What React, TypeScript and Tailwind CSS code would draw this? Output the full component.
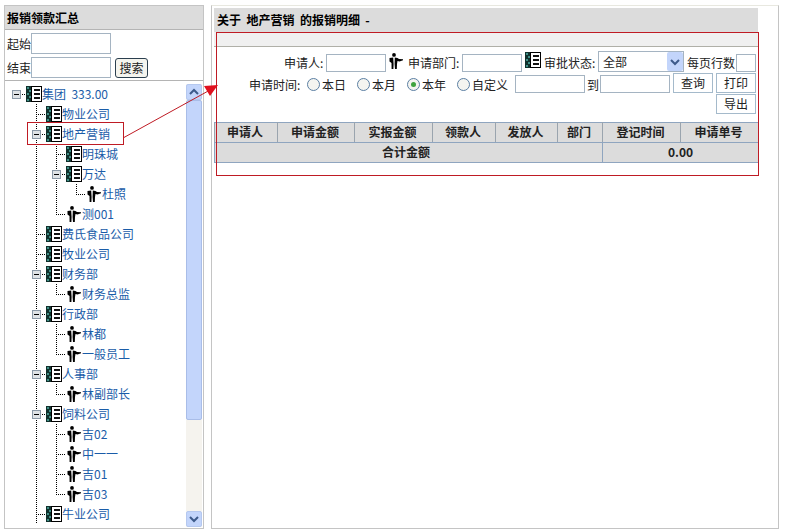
import * as React from 'react';

const FONT = "font-['Noto_Sans_CJK_SC','Liberation_Sans',sans-serif]";

type Kind = 'book' | 'person';
type Joint = 'tee' | 'corner' | 'minus' | 'minusRoot';

interface TreeRow {
  label: string;
  kind: Kind;
  joint: Joint;
  // columns to the left of the joint: true draws a dotted vertical line
  guides: boolean[];
}

const TREE: TreeRow[] = [
  { label: '集团\u00a0\u00a0333.00', kind: 'book', joint: 'minusRoot', guides: [] },
  { label: '物业公司', kind: 'book', joint: 'tee', guides: [false] },
  { label: '地产营销', kind: 'book', joint: 'minus', guides: [false] },
  { label: '明珠城', kind: 'book', joint: 'tee', guides: [false, true] },
  { label: '万达', kind: 'book', joint: 'minus', guides: [false, true] },
  { label: '杜照', kind: 'person', joint: 'corner', guides: [false, true, true] },
  { label: '测001', kind: 'person', joint: 'corner', guides: [false, true] },
  { label: '费氏食品公司', kind: 'book', joint: 'tee', guides: [false] },
  { label: '牧业公司', kind: 'book', joint: 'tee', guides: [false] },
  { label: '财务部', kind: 'book', joint: 'minus', guides: [false] },
  { label: '财务总监', kind: 'person', joint: 'corner', guides: [false, true] },
  { label: '行政部', kind: 'book', joint: 'minus', guides: [false] },
  { label: '林都', kind: 'person', joint: 'tee', guides: [false, true] },
  { label: '一般员工', kind: 'person', joint: 'corner', guides: [false, true] },
  { label: '人事部', kind: 'book', joint: 'minus', guides: [false] },
  { label: '林副部长', kind: 'person', joint: 'corner', guides: [false, true] },
  { label: '饲料公司', kind: 'book', joint: 'minus', guides: [false] },
  { label: '吉02', kind: 'person', joint: 'tee', guides: [false, true] },
  { label: '中一一', kind: 'person', joint: 'tee', guides: [false, true] },
  { label: '吉01', kind: 'person', joint: 'tee', guides: [false, true] },
  { label: '吉03', kind: 'person', joint: 'corner', guides: [false, true] },
  { label: '牛业公司', kind: 'book', joint: 'tee', guides: [false] },
];

const COLUMNS = [
  { label: '申请人', width: 'w-[63px]' },
  { label: '申请金额', width: 'w-[77px]' },
  { label: '实报金额', width: 'w-[78px]' },
  { label: '领款人', width: 'w-[63px]' },
  { label: '发放人', width: 'w-[62px]' },
  { label: '部门', width: 'w-[45px]' },
  { label: '登记时间', width: 'w-[78px]' },
  { label: '申请单号', width: 'w-[78px]' },
];

const BookIcon = () => (
  <svg width="16" height="16" viewBox="0 0 16 16" className="shrink-0">
    <rect x="0" y="0" width="6" height="16" fill="#10302c" />
    <path d="M1 1h2v2H1zM3 4h2v2H3zM1 7h2v2H1zM3 10h2v2H3zM1 13h2v2H1z" fill="#3f8f86" />
    <rect x="5.5" y="0.5" width="10" height="15" fill="#fff" stroke="#000" />
    <path d="M8 3h6v2H8zM8 7h6v2H8zM8 11h6v2H8z" fill="#111" />
  </svg>
);

const PersonIcon = () => (
  <svg width="16" height="16" viewBox="0 0 16 16" className="shrink-0">
    <circle cx="6" cy="1.9" r="1.9" fill="#000" />
    {/* left side of the jacket and leg */}
    <path d="M1.5 5L5.2 4.5L5.6 11L5.4 16H3.6L3.5 10L1.5 8.5z" fill="#000" />
    {/* right side of the jacket, arm pointing out */}
    <path d="M6.8 4.5L9.5 5L11 6L15 6.2V7.2L11.5 8.5L9.5 8L9 11L8.8 16H7L6.6 11z" fill="#000" />
  </svg>
);

const Joint = ({ joint }: { joint: Joint }) => {
  const root = joint === 'minusRoot';
  const corner = joint === 'corner';
  const minus = joint === 'minus' || root;
  return (
    <svg width="20" height="20" viewBox="0 0 20 20" className="shrink-0">
      <g stroke="#000" strokeDasharray="1 1">
        {!root && <line x1="10.5" y1="0" x2="10.5" y2={corner ? 10 : 20} />}
        <line x1="10" y1="10.5" x2="20" y2="10.5" />
      </g>
      {minus && (
        <>
          <rect x="6.5" y="6.5" width="8" height="8" fill="#dfe3e6" stroke="#8c9aa8" />
          <line x1="8" y1="10.5" x2="13" y2="10.5" stroke="#000" />
        </>
      )}
    </svg>
  );
};

const Guide = ({ on }: { on: boolean }) => (
  <svg width="20" height="20" viewBox="0 0 20 20" className="shrink-0">
    {on && <line x1="10.5" y1="0" x2="10.5" y2="20" stroke="#000" strokeDasharray="1 1" />}
  </svg>
);

const Chevron = ({ up = false, size = 10 }: { up?: boolean; size?: number }) => (
  <svg width={size} height={size} viewBox="0 0 10 10">
    <path d={up ? 'M1 7l4-4 4 4' : 'M1 3l4 4 4-4'} fill="none" stroke="#3d5a8a" strokeWidth="2" />
  </svg>
);

const Field = ({ width, height = 'h-[18px]' }: { width: string; height?: string }) => (
  <span className={`${width} ${height} block shrink-0 border border-[#a5b4c2] bg-white`} />
);

const Radio = ({ label, checked = false, width = 'w-[50px]' }: { label: string; checked?: boolean; width?: string }) => (
  <span className={`${width} flex shrink-0 items-center gap-[2px] pb-[2px]`}>
    <span className="flex h-[13px] w-[13px] items-center justify-center rounded-full border border-[#5b7fa3] bg-[#f4f4f0]">
      {checked && <span className="h-[5px] w-[5px] rounded-full bg-[#3fa33f]" />}
    </span>
    <span>{label}</span>
  </span>
);

const FlatButton = ({ label }: { label: string }) => (
  <span className="flex h-[20px] w-[40px] shrink-0 items-center justify-center border border-[#a5bacb] bg-white">
    {label}
  </span>
);

function App() {
  return (
    <div className={`${FONT} relative flex h-[532px] w-[799px] gap-[7px] overflow-hidden bg-white pl-[4px] pt-[5px] text-[12px] leading-none text-[#222]`}>
      {/* Left panel */}
      <div className="flex h-[524px] w-[200px] shrink-0 flex-col border border-[#c4c4c4]">
        <div className="flex h-[24px] shrink-0 items-center border-b border-[#b4b4b4] bg-[#dcdcdc] pl-[2px] font-bold text-black">
          报销领款汇总
        </div>
        <div className="flex h-[51px] shrink-0 flex-col gap-[3px] border-b border-[#b4b4b4] pl-[2px] pt-[3px]">
          <div className="flex items-center">
            <span className="w-[24px]">起始</span>
            <Field width="w-[80px]" height="h-[21px]" />
          </div>
          <div className="flex items-center">
            <span className="w-[24px]">结束</span>
            <Field width="w-[80px]" height="h-[21px]" />
            <span className="ml-[4px] flex h-[20px] w-[33px] items-center justify-center rounded-[3px] border border-[#2b3f4f] bg-[#f4f4ee]">
              搜索
            </span>
          </div>
        </div>
        <div className="flex min-h-0 flex-1">
          <div className="min-w-0 flex-1 overflow-hidden pl-[1px] pt-[3px] text-[#1a5ca8]">
            {TREE.map((row) => (
              <div key={row.label} className="flex h-[20px] items-center whitespace-nowrap">
                {row.guides.map((on, i) => (
                  <Guide key={i} on={on && i > 0} />
                ))}
                <Joint joint={row.joint} />
                {row.kind === 'book' ? <BookIcon /> : <PersonIcon />}
                <span>{row.label}</span>
              </div>
            ))}
          </div>
          <div className="mr-[1px] mt-[3px] mb-[1px] flex w-[16px] shrink-0 flex-col bg-[#f5f3ee]">
            <span className="flex h-[16px] items-center justify-center rounded-[2px] border border-[#b5c8ef] bg-[#c3d5fb]">
              <Chevron up />
            </span>
            <span className="h-[320px] rounded-[2px] border border-[#a9bde8] bg-[#c3d5fb]" />
            <span className="mt-auto flex h-[16px] items-center justify-center rounded-[2px] border border-[#b5c8ef] bg-[#c3d5fb]">
              <Chevron />
            </span>
          </div>
        </div>
      </div>

      {/* Right panel */}
      <div className="h-[524px] w-[568px] shrink-0 border border-[#c4c4c4] border-t-[#e8e8e0] pl-[2px] pt-[2px]">
        <div className="w-[544px]">
          <div className="flex h-[24px] items-center bg-[#dcdcdc] pl-[3px] font-bold text-black">
            关于&nbsp;&nbsp;地产营销&nbsp;&nbsp;的报销明细&nbsp;&nbsp;-
          </div>
          <div className="h-[15px] border-b border-[#b0b0a8] bg-[#f0f0f0]" />
          <div className="flex h-[75px] flex-col items-end pr-[2px]">
            <div className="mt-[4px] flex h-[21px] items-end">
              <span className="w-[42px] pb-[3px]">申请人:</span>
              <Field width="w-[60px]" />
              <span className="ml-[2px] mr-[4px] pb-[3px]"><PersonIcon /></span>
              <span className="w-[54px] pb-[3px]">申请部门:</span>
              <Field width="w-[60px]" />
              <span className="ml-[3px] mr-[3px] pb-[4px]"><BookIcon /></span>
              <span className="w-[52px] pb-[3px]">审批状态:</span>
              <span className="ml-[2px] flex h-[21px] w-[86px] items-center justify-between border border-[#a5b4c2] pl-[4px]">
                全部
                <span className="flex h-[19px] w-[16px] items-center justify-center rounded-[2px] bg-[#c3d5fb]"><Chevron /></span>
              </span>
              <span className="ml-[3px] w-[49px] pb-[3px]">每页行数</span>
              <Field width="w-[20px]" />
            </div>
            <div className="mt-px flex h-[20px] items-end">
              <span className="mr-[4px] w-[54px] pb-[2px]">申请时间:</span>
              <Radio label="本日" />
              <Radio label="本月" />
              <Radio label="本年" checked />
              <Radio label="自定义" width="w-[58px]" />
              <Field width="w-[70px]" />
              <span className="ml-[2px] mr-px w-[12px] pb-[2px]">到</span>
              <Field width="w-[70px]" />
              <span className="ml-[3px]"><FlatButton label="查询" /></span>
              <span className="ml-[3px]"><FlatButton label="打印" /></span>
            </div>
            <div className="mt-px"><FlatButton label="导出" /></div>
          </div>
          <table className="w-[544px] table-fixed border-collapse font-bold">
            <thead>
              <tr className="h-[20px] bg-[#dcdcdc]">
                {COLUMNS.map((col) => (
                  <th key={col.label} className={`${col.width} border border-[#8fa5bf] border-x-[#9aa4ae] p-0 pb-px pr-[2px] text-center font-bold`}>
                    {col.label}
                  </th>
                ))}
              </tr>
            </thead>
            <tbody>
              <tr className="h-[20px] bg-[#dcdcdc]">
                <td colSpan={6} className="border border-[#8fa5bf] p-0 pb-px pr-[5px] text-center">合计金额</td>
                <td colSpan={2} className="border border-[#8fa5bf] p-0 pb-px text-center">0.00</td>
              </tr>
            </tbody>
          </table>
        </div>
      </div>

      {/* Red annotations drawn over the page */}
      <span className="pointer-events-none absolute left-[27px] top-[122px] h-[23px] w-[97px] border border-[#bf1b24]" />
      <span className="pointer-events-none absolute left-[216px] top-[32px] h-[144px] w-[543px] border border-[#bf1b24]" />
      <svg width="799" height="532" className="pointer-events-none absolute left-0 top-0">
        <line x1="123" y1="138" x2="210" y2="90" stroke="#bf1b24" />
        <path d="M218 85L204 86L210 96z" fill="#e0101e" />
      </svg>
    </div>
  );
}

export default App;
